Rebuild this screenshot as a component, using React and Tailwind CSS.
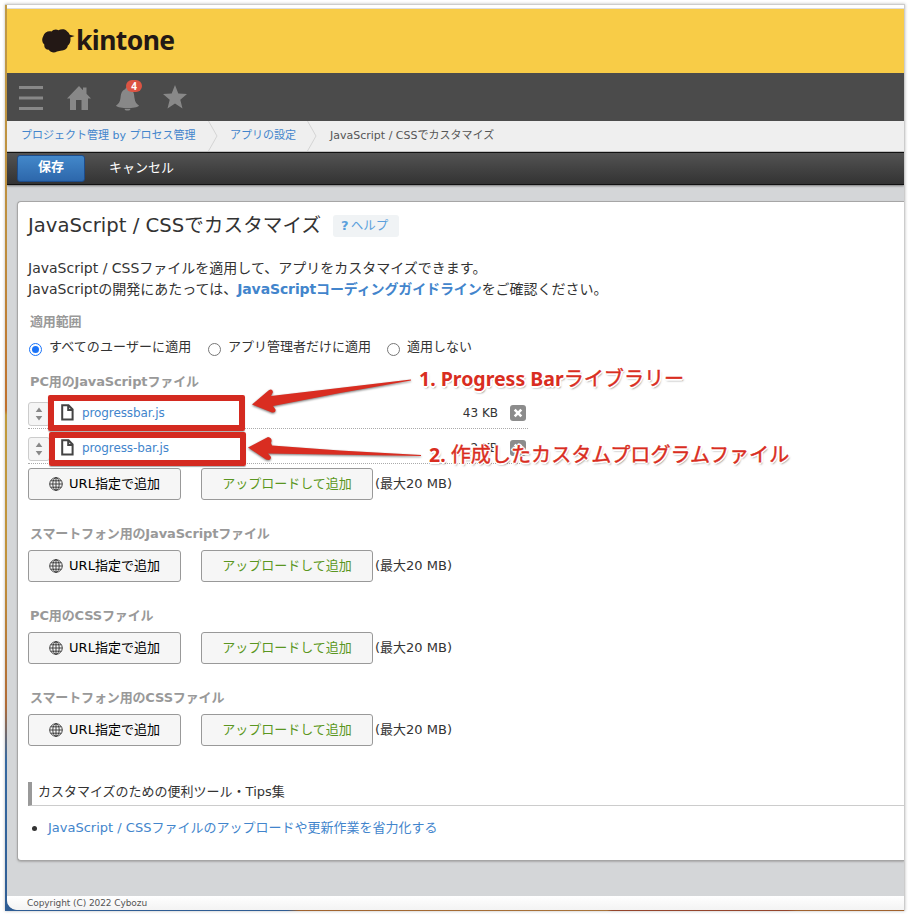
import React from 'react';

const sections = [
  { title: 'スマートフォン用のJavaScriptファイル' },
  { title: 'PC用のCSSファイル' },
  { title: 'スマートフォン用のCSSファイル' },
];

const files = [
  { name: 'progressbar.js', size: '43 KB' },
  { name: 'progress-bar.js', size: '2 KB' },
];

function Logo() {
  return (
    <div className="flex h-[64px] items-center bg-[#f8cc47] pl-[35px]">
      <svg width="33" height="24" viewBox="0 0 33 24" className="-mt-px" fill="#231815">
        <path d="M9.5 2.6C11 .3 14.5-.2 16.400 1.200C19-.2 23.500-.2 25.200 2.400C26.600 3.200 27.300 4.500 27.700 5.700L32.700 6.900L28.300 8.600C29 11.500 28 15 25.800 16.600C25.500 19.500 23 21.500 20 21.400C18 21.900 16.500 22 15 22.500C12 24.200 8.500 23.400 6.800 20.700C3.500 20.700 1.800 18.200 2.400 15.700C-.3 13.500-.3 9.500 1.200 7.200C2.500 3.500 6 1.600 9.500 2.600Z" />
      </svg>
      <span className="-mt-[2px] ml-px font-['Noto_Sans'] text-[26.500px] leading-none font-bold tracking-[-0.6px] text-[#231815]">
        kintone
      </span>
    </div>
  );
}

function GlobalNav() {
  return (
    <nav className="flex h-[48px] items-start bg-[#4b4b4b] text-[#888]">
      <svg width="24" height="26" viewBox="0 0 24 26" fill="currentColor" className="mt-[12px] ml-[12px]">
        <path d="M0 1h24v3H0zM0 11.500h24v3H0zM0 22h24v3H0z" />
      </svg>
      <svg width="24" height="25" viewBox="0 0 24 25" fill="currentColor" className="mt-[13px] ml-[24px]">
        <path d="M12 0L16 4.200V1.500H19.500V7.800L24 12.500H21V24H14.500V14H9V24H3V12.500H0Z" />
      </svg>
      <div className="relative mt-[14px] ml-[25px]">
        <svg width="23" height="24" viewBox="0 0 23 24" fill="currentColor">
          <path d="M11.500 0C13 0 13.500 1.500 13.500 2C18 3.500 18 7 18.500 11C19 15 20.500 17 23 18.500C22 20.500 16 21 11.500 21S1 20.500 0 18.500C2.500 17 4 15 4.500 11C5 7 5.500 3.500 9.500 2C9.500 1.500 10 0 11.500 0ZM8.500 21.700H14.500C14.500 23 13 23.500 11.500 23.500S8.500 23 8.500 21.700Z" />
        </svg>
        <span className="absolute -top-[7px] left-[10px] flex h-[12px] w-[16px] items-center justify-center rounded-full bg-[#dc5443] font-['Noto_Sans'] text-[10px] leading-none font-bold text-white">
          4
        </span>
      </div>
      <svg width="24" height="24" viewBox="0 0 24 24" fill="currentColor" className="mt-[12px] ml-[24px]">
        <path d="M12 0L15.300 8.500L24 8.900L17.300 14.700L19.500 23.500L12 18.600L4.500 23.500L6.700 14.700L0 8.900L8.700 8.500Z" />
      </svg>
    </nav>
  );
}

function Separator() {
  return (
    <svg width="10" height="30" viewBox="0 0 10 30" fill="none" stroke="#d4d4d4" className="shrink-0">
      <path d="M.5 0L9 15L.5 30" />
    </svg>
  );
}

function Breadcrumb() {
  return (
    <div className="flex h-[31px] items-start border-b border-[#c4c4c4] bg-[#efefef] text-[11px] text-[#4285cc]">
      <span className="ml-[14px] w-[187px] leading-[29px]">プロジェクト管理 by プロセス管理</span>
      <Separator />
      <span className="ml-[12px] w-[77px] leading-[29px]">アプリの設定</span>
      <Separator />
      <span className="ml-[13px] leading-[29px] text-[#555]">JavaScript / CSSでカスタマイズ</span>
    </div>
  );
}

function Toolbar() {
  return (
    <div className="relative flex h-[33px] items-start border-y border-[#111] bg-linear-to-b from-[#535353] to-[#333] pt-[2px] pl-[10px] text-[13px] text-white shadow-[0_1px_2px_#777]">
      <button className="h-[27px] w-[68px] rounded-[3px] border border-[#1d4c8b] bg-linear-to-b from-[#4388ca] to-[#2d67ab] pb-[3px] leading-[20px] font-bold">
        保存
      </button>
      <button className="ml-[24px] leading-[25px]">キャンセル</button>
    </div>
  );
}

function Radio({ label, checked, className }) {
  return (
    <label className={`flex items-start ${className}`}>
      <span
        className={`mt-[7px] mr-[7px] flex size-[13px] items-center justify-center rounded-full border ${
          checked ? 'border-[#1a73f8]' : 'border-[#777]'
        }`}
      >
        {checked && <span className="size-[7px] rounded-full bg-[#1a73f8]" />}
      </span>
      {label}
    </label>
  );
}

function Globe() {
  return (
    <svg width="14" height="14" viewBox="0 0 14 14" fill="none" stroke="#333" strokeWidth=".9">
      <circle cx="7" cy="7" r="6.300" />
      <ellipse cx="7" cy="7" rx="3.200" ry="6.300" />
      <path d="M7 .7v12.600M.7 7h12.600M1.700 3.800h10.600M1.700 10.200h10.600" />
    </svg>
  );
}

function AddButtons() {
  return (
    <div className="flex h-[32px] items-center text-[13px]">
      <button className="flex h-[32px] w-[153px] items-center justify-center gap-[6px] rounded-[3px] border border-[#999] bg-[#f6f6f6] pb-px text-black">
        <Globe />
        URL指定で追加
      </button>
      <button className="ml-[20px] h-[32px] w-[172px] rounded-[3px] border border-[#999] bg-[#f6f6f6] pb-px text-[#5a9621]">
        アップロードして追加
      </button>
      <span className="ml-[2px] pb-px">(最大20 MB)</span>
    </div>
  );
}

function FileRow({ file }) {
  return (
    <div className="flex h-[35px] w-[500px] items-start border-b border-dotted border-[#aaa] text-[12px]">
      <div className="mt-[8px] flex h-[24px] w-[22px] items-center justify-center rounded-[3px] border border-[#ccc] bg-[#f5f5f5]">
        <svg width="8" height="14" viewBox="0 0 8 14" fill="#888">
          <path d="M4 .5L7.300 5H.7ZM4 13.500L.7 9H7.300Z" />
        </svg>
      </div>
      <svg width="13" height="17" viewBox="0 0 13 17" fill="none" stroke="#444" strokeWidth="2" className="mt-[10px] ml-[11px]">
        <path d="M1.200 1.200H7.500L11.600 5.500V15.600H1.200ZM7.200 1.500V6H11.500" />
      </svg>
      <span className="mt-[10px] ml-[8px] leading-[18px] tracking-[-0.1px] text-[#4285cc]">{file.name}</span>
      <span className="mt-[10px] ml-auto leading-[18px]">{file.size}</span>
      <svg width="16" height="16" viewBox="0 0 16 16" className="mt-[11px] mr-[2px] ml-[12px]">
        <rect width="16" height="16" rx="3" fill="#8c8c8c" />
        <path d="M4.700 4.700L11.300 11.300M11.300 4.700L4.700 11.300" stroke="#fff" strokeWidth="2.600" />
      </svg>
    </div>
  );
}

function Heading({ children }) {
  return <h2 className="pl-[2px] text-[13px] leading-[20px] font-bold tracking-[-0.14px] text-[#999]">{children}</h2>;
}

function CalloutText({ number, japanese, className }) {
  return (
    <div
      className={`absolute font-['Noto_Sans','Noto_Sans_CJK_JP',sans-serif] text-[19.500px] leading-[26px] whitespace-nowrap text-[#d92d21] [text-shadow:2px_0_#fff,-2px_0_#fff,0_2px_#fff,0_-2px_#fff,1px_1px_#fff,-1px_1px_#fff,1px_-1px_#fff,-1px_-1px_#fff,1px_2px_2px_#777] ${className}`}
    >
      <b>{number}</b>
      <span className="text-[20.100px] font-normal [-webkit-text-stroke:0.4px_#d92d21]">{japanese}</span>
    </div>
  );
}

function Callouts() {
  return (
    <>
      <div className="absolute top-[395px] left-[48px] h-[36px] w-[197px] rounded-[2px] border-[6px] border-[#d42a20] shadow-[0_1px_1px_#aaa]" />
      <div className="absolute top-[432px] left-[49px] h-[34px] w-[197px] rounded-[2px] border-[6px] border-[#d42a20] shadow-[0_1px_1px_#aaa]" />
      <svg width="180" height="80" viewBox="245 380 180 80" className="absolute top-[380px] left-[245px] overflow-visible drop-shadow-[0_1px_1px_#777]" fill="#d92d21">
        <path d="M411 379.500L271 396L273 392Q272 388 268.500 390.500L252 404.500L272 412.500Q276 413 275.500 409.500L273 406L340 393L411 380.500Z" />
        <path d="M421 455L340 450.500L272 445.500L271 443Q273 438 268 437L248 447.500L266 459.500Q271 461 271 457L268 453.500L421 456Z" />
      </svg>
      <CalloutText number="1. Progress Bar" japanese="ライブラリー" className="top-[366px] left-[419px]" />
      <CalloutText number="2. " japanese="作成したカスタムプログラムファイル" className="top-[442px] left-[429px]" />
    </>
  );
}

export default function App() {
  return (
    <div className="relative h-[916px] w-[909px] overflow-hidden bg-white pt-[4px] pl-[5px] font-['DejaVu_Sans','Noto_Sans_CJK_JP',sans-serif] text-[#333]">
      <div className="h-[907px] w-[900px] border-t border-r border-[#ccc] bg-[linear-gradient(to_bottom,#c09a45_0px,#bd8d3d_240px,#bf6f2c_405px,#c09a3c_410px,#c0913a_560px,#b06a35_700px,#3568a0_755px,#2f5d94_905px)] pl-[2px] shadow-[0_0_3px_#bbb]">
        <div className="flex h-[905px] flex-col overflow-hidden rounded-bl-[10px] bg-[#d4d6d8]">
          <div className="h-[4px] shrink-0 border-b border-[#ddd] bg-white" />
          <Logo />
          <GlobalNav />
          <Breadcrumb />
          <Toolbar />
          <main className="mt-[16px] ml-[10px] h-[660px] rounded-l-[4px] border border-r-0 border-[#a6a6a6] bg-white pl-[10px] shadow-[0_1px_2px_#aaa]">
            <div className="flex h-[48px] items-center">
              <h1 className="text-[19.650px] leading-none">JavaScript / CSSでカスタマイズ</h1>
              <span className="ml-[12px] flex h-[22px] w-[66px] items-center justify-center gap-[2px] rounded-[3px] bg-[#f0f3f5] pr-[3px] text-[12.500px] text-[#5a9fdc]">
                <b className="text-[13px]">?</b>ヘルプ
              </span>
            </div>
            <p className="mt-[8px] text-[14px] leading-[21px]">
              JavaScript / CSSファイルを適用して、アプリをカスタマイズできます。
              <br />
              JavaScriptの開発にあたっては、
              <a className="font-bold tracking-[-0.12px] text-[#4285cc]">JavaScriptコーディングガイドライン</a>
              をご確認ください。
            </p>
            <div className="mt-[12px]">
              <Heading>適用範囲</Heading>
            </div>
            <div className="mt-[4px] flex h-[22px] pl-px text-[13px] leading-[22px]">
              <Radio label="すべてのユーザーに適用" checked className="w-[179px] tracking-[0.1px]" />
              <Radio label="アプリ管理者だけに適用" className="w-[179px]" />
              <Radio label="適用しない" />
            </div>
            <div className="mt-[14px]">
              <Heading>PC用のJavaScriptファイル</Heading>
            </div>
            <div className="mt-[2px]">
              {files.map((file) => (
                <FileRow key={file.name} file={file} />
              ))}
            </div>
            <div className="mt-[4px]">
              <AddButtons />
            </div>
            {sections.map((section) => (
              <section key={section.title} className="pt-[24px]">
                <Heading>{section.title}</Heading>
                <div className="mt-[6px]">
                  <AddButtons />
                </div>
              </section>
            ))}
            <h3 className="mt-[36px] h-[24px] border-b border-l-[4px] border-b-[#ccc] border-l-[#999] pl-[6px] text-[13px] leading-[20px]">
              カスタマイズのための便利ツール・Tips集
            </h3>
            <div className="mt-[12px] flex items-center text-[13px] leading-[20px] text-[#4285cc]">
              <span className="mr-[11px] ml-[4px] size-[5px] rounded-full bg-[#333]" />
              JavaScript / CSSファイルのアップロードや更新作業を省力化する
            </div>
          </main>
          <footer className="mt-auto h-[14px] bg-linear-to-b from-white to-[#f3f3f3] pl-[20px] text-[9px] leading-[14px] tracking-[-0.08px] text-[#555]">
            Copyright (C) 2022 Cybozu
          </footer>
        </div>
        <div className="h-px bg-[linear-gradient(to_right,#2f5d94_0px,#2f5d94_280px,#a0622e_292px,#a8743a_600px,#94452c_605px,#94452c_780px,#a0622e_790px)]" />
      </div>
      <Callouts />
    </div>
  );
}
